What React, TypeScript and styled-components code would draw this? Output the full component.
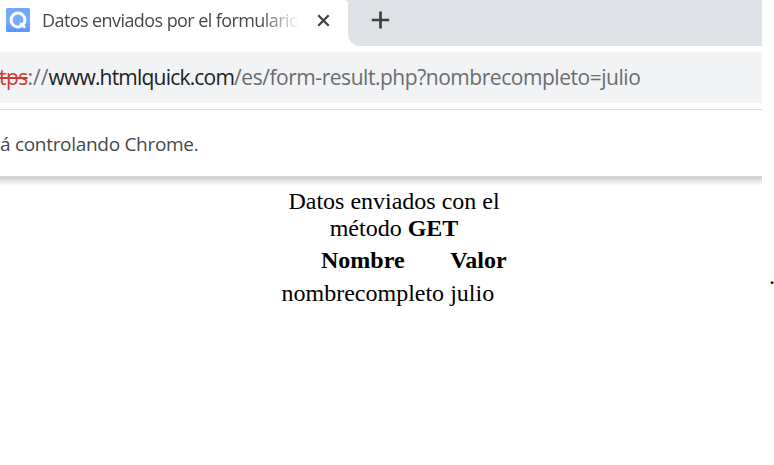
import React from "react";
import styled, { createGlobalStyle } from "styled-components";

const GlobalStyle = createGlobalStyle`
  body { margin: 0; background: #fff; overflow: hidden; }
`;

const Page = styled.div`
  display: flex;
  align-items: flex-start;
  width: 774px;
  height: 465px;
  overflow: hidden;
  background: #fff;
  font-family: "Open Sans", "Noto Sans", sans-serif;
`;

const BrowserWindow = styled.div`
  width: 762px;
  height: 465px;
  flex: none;
  overflow: hidden;
`;

const TabStrip = styled.div`
  display: flex;
  height: 46px;
  background: linear-gradient(#dee1e6 30px, #fff 30px);
`;

const ActiveTab = styled.div`
  display: flex;
  align-items: center;
  box-sizing: border-box;
  width: 348px;
  height: 46px;
  padding: 0 0 6px 6px;
  background: #fff;
  border-top-right-radius: 4px;
`;

const TabTitle = styled.div`
  width: 257px;
  margin-left: 12px;
  overflow: hidden;
  white-space: nowrap;
  font-size: 18px;
  line-height: 28px;
  letter-spacing: -0.58px;
  color: #45494d;
  mask-image: linear-gradient(to right, #000 218px, transparent 257px);
`;

const CloseIcon = styled.svg`
  margin-left: 18px;
`;

const NewTabArea = styled.div`
  flex: 1;
  background: #dee1e6;
  border-bottom-left-radius: 12px;
`;

const PlusIcon = styled.svg`
  margin: 11px 0 0 23px;
`;

const AddressBar = styled.div`
  display: flex;
  align-items: center;
  box-sizing: border-box;
  height: 51px;
  margin: 6px 0;
  padding-bottom: 1px;
  background: #f1f3f4;
  font-size: 21px;
  white-space: pre;
  color: #6a6d70;
`;

const Scheme = styled.span`
  margin-left: -1px;
  color: #d03a32;
  text-decoration: line-through;
  letter-spacing: -0.6px;
`;

const Slashes = styled.span`
  letter-spacing: 0;
`;

const Host = styled.span`
  color: #202124;
  letter-spacing: -0.8px;
`;

const UrlPath = styled.span`
  letter-spacing: -0.46px;
`;

const InfoBar = styled.div`
  display: flex;
  align-items: center;
  box-sizing: border-box;
  height: 68px;
  padding-top: 2px;
  border-top: 1px solid #dadce0;
  border-bottom: 1px solid #d5d7d9;
  font-size: 19px;
  letter-spacing: -0.3px;
  color: #45494d;
`;

const Viewport = styled.main`
  height: 288px;
  background: linear-gradient(#c9cbcb, #e5e5e5 4px, #fff 9px);
  font-family: "Liberation Serif", "Times New Roman", serif;
  font-size: 24px;
  line-height: 27px;
  color: #000;
  overflow: hidden;
`;

const ResultTable = styled.table`
  margin: 11px 0 0 277px;
  border-spacing: 3px;
  font-size: 24px;
  line-height: 27px;
`;

const Cell = styled.td`
  padding: 1.5px;
`;

const HeaderCell = styled.th`
  padding: 1.5px;
`;

const Period = styled.div`
  margin: 263px 0 0 7px;
  font-family: "Liberation Serif", serif;
  font-size: 24px;
  line-height: 27px;
`;

export default function App() {
  return (
    <Page>
      <GlobalStyle />
      <BrowserWindow>
        <TabStrip>
          <ActiveTab>
            <svg width="24" height="24" viewBox="0 0 24 24">
              <defs>
                <linearGradient id="tile" x1="0" y1="0" x2="0" y2="1">
                  <stop offset="0" stopColor="#70a7f7" />
                  <stop offset="0.55" stopColor="#76adff" />
                  <stop offset="1" stopColor="#5b96f8" />
                </linearGradient>
              </defs>
              <rect width="24" height="24" rx="1.5" fill="url(#tile)" />
              <circle cx="12" cy="12" r="6.9" fill="none" stroke="#fff" strokeWidth="3" />
              <path d="M14 15.2l5.2 4.3" stroke="#fff" strokeWidth="2.6" />
            </svg>
            <TabTitle>Datos enviados por el formulario</TabTitle>
            <CloseIcon width="13" height="13" viewBox="0 0 13 13">
              <path d="M1.3 1.3l10.4 10.4M11.7 1.3L1.3 11.7" stroke="#3c4043" strokeWidth="2.2" />
            </CloseIcon>
          </ActiveTab>
          <NewTabArea>
            <PlusIcon width="19" height="18" viewBox="0 0 19 18">
              <path d="M9.5 .5v17M.8 9h17.4" stroke="#3c4043" strokeWidth="2.7" />
            </PlusIcon>
          </NewTabArea>
        </TabStrip>
        <AddressBar>
          <Scheme>tps</Scheme>
          <Slashes>://</Slashes>
          <Host>www.htmlquick.com</Host>
          <UrlPath>/es/form-result.php?nombrecompleto=julio</UrlPath>
        </AddressBar>
        <InfoBar>á controlando Chrome.</InfoBar>
        <Viewport>
          <ResultTable>
            <caption>
              Datos enviados con el
              <br />
              método <b>GET</b>
            </caption>
            <thead>
              <tr>
                <HeaderCell>Nombre</HeaderCell>
                <HeaderCell>Valor</HeaderCell>
              </tr>
            </thead>
            <tbody>
              <tr>
                <Cell>nombrecompleto</Cell>
                <Cell>julio</Cell>
              </tr>
            </tbody>
          </ResultTable>
        </Viewport>
      </BrowserWindow>
      <Period>.</Period>
    </Page>
  );
}
